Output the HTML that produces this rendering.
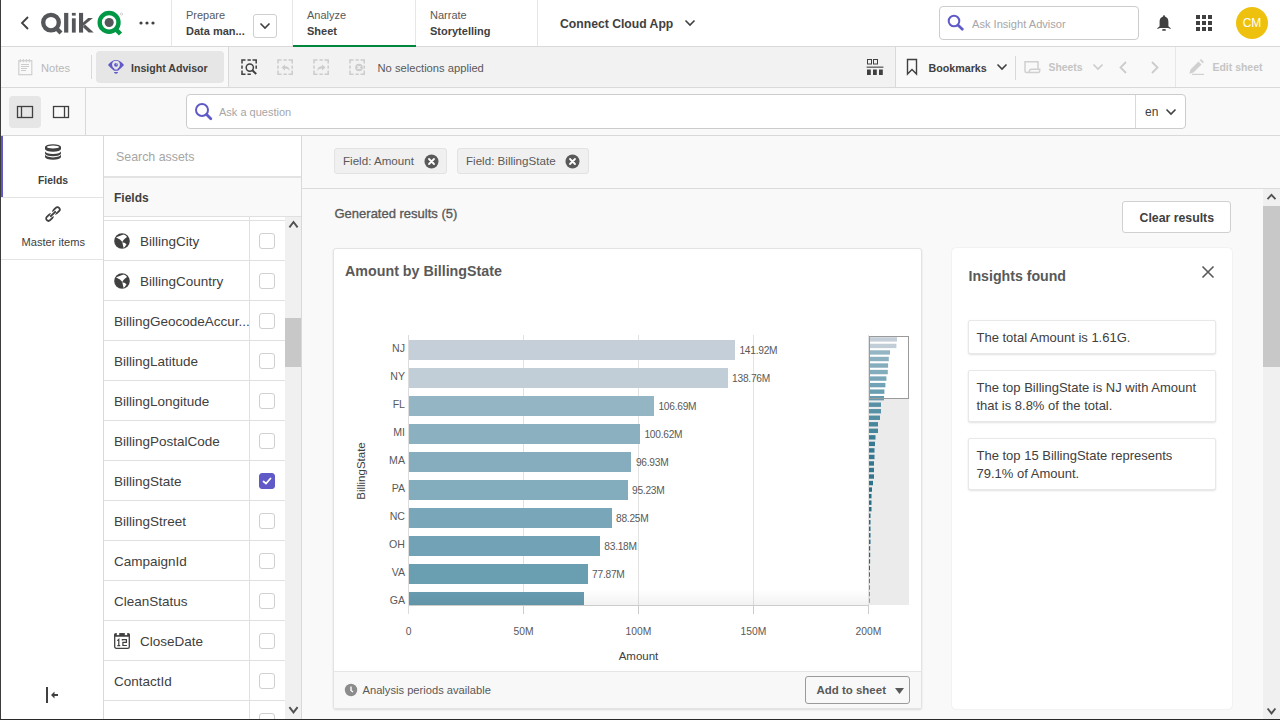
<!DOCTYPE html>
<html><head><meta charset="utf-8"><title>Qlik Sense - Insight Advisor</title>
<style>
html,body{margin:0;padding:0}
body{width:1280px;height:720px;overflow:hidden;position:relative;background:#f9f9f9;font-family:"Liberation Sans", sans-serif}
.t{position:absolute;white-space:nowrap;font-family:"Liberation Sans", sans-serif}
svg{display:block}
</style></head><body>
<div style="position:absolute;left:0px;top:0px;width:1280px;height:46px;background:#fff"></div><div style="position:absolute;left:0px;top:46px;width:1280px;height:1px;background:#d9d9d9"></div><div style="position:absolute;left:0px;top:47px;width:228px;height:40px;background:#f9f9f9"></div><div style="position:absolute;left:228px;top:47px;width:1px;height:40px;background:#d9d9d9"></div><div style="position:absolute;left:229px;top:47px;width:666px;height:40px;background:#f2f2f2"></div><div style="position:absolute;left:895px;top:47px;width:1px;height:40px;background:#d9d9d9"></div><div style="position:absolute;left:896px;top:47px;width:384px;height:40px;background:#f9f9f9"></div><div style="position:absolute;left:0px;top:87px;width:1280px;height:1px;background:#d9d9d9"></div><div style="position:absolute;left:0px;top:88px;width:1280px;height:47px;background:#f9f9f9"></div><div style="position:absolute;left:85px;top:88px;width:1px;height:47px;background:#d9d9d9"></div><div style="position:absolute;left:0px;top:135px;width:1280px;height:1px;background:#d9d9d9"></div><div style="position:absolute;left:0px;top:136px;width:103px;height:584px;background:#fff"></div><div style="position:absolute;left:103px;top:136px;width:1px;height:584px;background:#d9d9d9"></div><div style="position:absolute;left:1px;top:136px;width:2px;height:61px;background:#5f5ac8"></div><div style="position:absolute;left:0px;top:197px;width:103px;height:1px;background:#e3e3e3"></div><div style="position:absolute;left:0px;top:259px;width:103px;height:1px;background:#e3e3e3"></div><div style="position:absolute;left:104px;top:136px;width:197px;height:584px;background:#fff"></div><div style="position:absolute;left:301px;top:136px;width:1px;height:584px;background:#d9d9d9"></div><div style="position:absolute;left:104px;top:176px;width:197px;height:2px;background:#e3e3e3"></div><div style="position:absolute;left:104px;top:178px;width:197px;height:38px;background:#f9f9f9"></div><div style="position:absolute;left:104px;top:216px;width:197px;height:1px;background:#e0e0e0"></div><div style="position:absolute;left:302px;top:136px;width:978px;height:584px;background:#f9f9f9"></div><div style="position:absolute;left:302px;top:188px;width:978px;height:1px;background:#dcdcdc"></div><svg style="position:absolute;left:18px;top:14px;" width="14" height="18" viewBox="0 0 14 18"><path d="M10 3 L4 9 L10 15" fill="none" stroke="#404040" stroke-width="1.8"/></svg><svg style="position:absolute;left:36px;top:6px;" width="92" height="34" viewBox="0 0 92 34"><circle cx="15" cy="16.6" r="7.8" fill="none" stroke="#54565a" stroke-width="4.3"/><path d="M20 22 L25 27" stroke="#54565a" stroke-width="4.2"/><rect x="28.1" y="6.9" width="4.2" height="19.7" fill="#54565a"/><rect x="35.9" y="6.9" width="3.8" height="2.7" fill="#54565a"/><rect x="35.9" y="12.3" width="3.8" height="14.3" fill="#54565a"/><rect x="43" y="6.9" width="4.1" height="19.7" fill="#54565a"/><path d="M46.5 20.5 L56.9 12.1 L52.2 12.1 L46.5 17 Z" fill="#54565a"/><path d="M49 18.5 L57.7 26.6 L52.7 26.6 L46.8 21 Z" fill="#54565a"/><circle cx="73.1" cy="16.4" r="9.4" fill="none" stroke="#009845" stroke-width="4.4"/><circle cx="73.15" cy="16.5" r="4.55" fill="#54565a"/><path d="M79.5 23 L84.5 28" stroke="#009845" stroke-width="4.4"/><circle cx="85.5" cy="8" r="1.1" fill="none" stroke="#aaa" stroke-width="0.5"/></svg><svg style="position:absolute;left:139px;top:20px;" width="16" height="6" viewBox="0 0 16 6"><circle cx="2" cy="3" r="1.6" fill="#404040"/><circle cx="8" cy="3" r="1.6" fill="#404040"/><circle cx="14" cy="3" r="1.6" fill="#404040"/></svg><div style="position:absolute;left:171px;top:0px;width:1px;height:46px;background:#e6e6e6"></div><div style="position:absolute;left:292px;top:0px;width:1px;height:46px;background:#e6e6e6"></div><div style="position:absolute;left:415px;top:0px;width:1px;height:46px;background:#e6e6e6"></div><div style="position:absolute;left:537px;top:0px;width:1px;height:46px;background:#e6e6e6"></div><div class="t" style="left:186px;top:5.0px;font-size:11px;line-height:20px;color:#595959;font-weight:400;">Prepare</div><div class="t" style="left:186px;top:20.5px;font-size:11px;line-height:20px;color:#404040;font-weight:700;">Data man...</div><div style="position:absolute;left:253px;top:14px;width:24px;height:24px;box-sizing:border-box;border:1px solid #cfcfcf;border-radius:3px;background:#fff"></div><svg style="position:absolute;left:259px;top:22px;" width="12" height="8" viewBox="0 0 12 8"><path d="M1.5 1.5 L6 6 L10.5 1.5" fill="none" stroke="#404040" stroke-width="1.6"/></svg><div class="t" style="left:307px;top:5.0px;font-size:11px;line-height:20px;color:#595959;font-weight:400;">Analyze</div><div class="t" style="left:307px;top:20.5px;font-size:11px;line-height:20px;color:#404040;font-weight:700;">Sheet</div><div style="position:absolute;left:293px;top:45px;width:123px;height:2px;background:#00873d"></div><div class="t" style="left:430px;top:5.0px;font-size:11px;line-height:20px;color:#595959;font-weight:400;">Narrate</div><div class="t" style="left:430px;top:20.5px;font-size:11px;line-height:20px;color:#404040;font-weight:700;">Storytelling</div><div class="t" style="left:560px;top:13.8px;font-size:12.2px;line-height:20px;color:#404040;font-weight:700;">Connect Cloud App</div><svg style="position:absolute;left:684px;top:19px;" width="12" height="8" viewBox="0 0 12 8"><path d="M1.5 1.5 L6 6 L10.5 1.5" fill="none" stroke="#404040" stroke-width="1.6"/></svg><div style="position:absolute;left:939px;top:6px;width:200px;height:34px;box-sizing:border-box;border:1px solid #cccccc;border-radius:4px;background:#fff"></div><svg style="position:absolute;left:947px;top:14px;" width="18" height="18" viewBox="0 0 18 18"><circle cx="7" cy="7" r="5.3" fill="none" stroke="#5f5ac8" stroke-width="2"/><path d="M11.2 11.2 L15.3 15.3" stroke="#5f5ac8" stroke-width="2.7" stroke-linecap="round"/></svg><div class="t" style="left:972px;top:13.5px;font-size:11.1px;line-height:20px;color:#a6a6a6;font-weight:400;">Ask Insight Advisor</div><svg style="position:absolute;left:1156px;top:14px;" width="16" height="18" viewBox="0 0 16 18"><rect x="7.1" y="1.2" width="1.9" height="2.2" rx="0.8" fill="#404040"/><path d="M8 2.6 C5.2 2.6 3.6 5 3.6 8 V12.3 L1.3 14.3 Q1.2 15.2 2.2 14.8 Q3 14 4.2 14 H11.8 Q13 14 13.8 14.8 Q14.8 15.2 14.7 14.3 L12.4 12.3 V8 C12.4 5 10.8 2.6 8 2.6 Z" fill="#404040"/><ellipse cx="8" cy="15.9" rx="2" ry="0.95" fill="#404040"/></svg><svg style="position:absolute;left:1195px;top:14px;" width="18" height="18" viewBox="0 0 18 18"><rect x="1" y="1" width="4" height="4" fill="#404040"/><rect x="1" y="7" width="4" height="4" fill="#404040"/><rect x="1" y="13" width="4" height="4" fill="#404040"/><rect x="7" y="1" width="4" height="4" fill="#404040"/><rect x="7" y="7" width="4" height="4" fill="#404040"/><rect x="7" y="13" width="4" height="4" fill="#404040"/><rect x="13" y="1" width="4" height="4" fill="#404040"/><rect x="13" y="7" width="4" height="4" fill="#404040"/><rect x="13" y="13" width="4" height="4" fill="#404040"/></svg><div style="position:absolute;left:1236px;top:7px;width:32px;height:32px;border-radius:50%;background:#efc10f"></div><div class="t" style="left:1236px;top:13px;width:32px;text-align:center;font-size:12px;line-height:20px;color:#fff">CM</div><svg style="position:absolute;left:17px;top:58px;" width="17" height="18" viewBox="0 0 17 18"><rect x="1.8" y="2.7" width="13" height="14" fill="none" stroke="#cccccc" stroke-width="1.1"/><path d="M3.3 1 V4.3 M6.3 1 V4.3 M9.3 1 V4.3 M12.3 1 V4.3" stroke="#cccccc" stroke-width="1"/><path d="M4 6.5 H12 M4 8.5 H12 M4 10.5 H10 M4 12.5 H9" stroke="#cccccc" stroke-width="1"/></svg><div class="t" style="left:41px;top:57.5px;font-size:11.1px;line-height:20px;color:#b8b8b8;font-weight:400;">Notes</div><div style="position:absolute;left:91px;top:55px;width:1px;height:24px;background:#d9d9d9"></div><div style="position:absolute;left:96px;top:51px;width:128px;height:32px;background:#e6e6e6;border-radius:4px"></div><svg style="position:absolute;left:104px;top:55px;" width="24" height="24" viewBox="0 0 24 24"><path d="M4 10 Q8 5 12 5 Q16 5 20 10 Q17 13.5 14 15.7 H10 Q7 13.5 4 10 Z" fill="#5f5ac8"/><circle cx="12" cy="9.6" r="3.9" fill="#e6e6e6"/><path d="M9.1 11.6 L10.6 14.6 H13.4 L14.9 11.6 Z" fill="#e6e6e6"/><circle cx="12" cy="9.8" r="1.9" fill="#5f5ac8"/><circle cx="12.7" cy="9.1" r="0.6" fill="#e6e6e6"/><path d="M10 17 H14 Q14 18.8 12 18.8 Q10 18.8 10 17 Z" fill="#5f5ac8"/></svg><div class="t" style="left:131px;top:57.5px;font-size:10.6px;line-height:20px;color:#404040;font-weight:700;">Insight Advisor</div><svg style="position:absolute;left:240.5px;top:58.5px;" width="17" height="17" viewBox="0 0 17 17"><path d="M1 4.5 V1 H4.5 M11.5 1 H15.2 V4.5 M4.5 15.2 H1 V11.5 M6.5 1 H9.8 M15.2 6.5 V9.8 M9.8 15.2 H6.5 M1 9.8 V6.5" fill="none" stroke="#404040" stroke-width="1.5"/><circle cx="8.8" cy="8.6" r="3.6" fill="none" stroke="#404040" stroke-width="1.5"/><path d="M11.4 11.2 L15.2 15" stroke="#404040" stroke-width="2"/></svg><svg style="position:absolute;left:276.5px;top:58.5px;" width="17" height="17" viewBox="0 0 17 17"><path d="M1 4.5 V1 H4.5 M11.5 1 H15.2 V4.5 M15.2 11.5 V15.2 H11.5 M4.5 15.2 H1 V11.5 M6.5 1 H9.8 M15.2 6.5 V9.8 M9.8 15.2 H6.5 M1 9.8 V6.5" fill="none" stroke="#cccccc" stroke-width="1.5"/><path d="M4.5 8.5 L8 5.5 V7.3 Q12.5 7.3 12.8 12 Q11.3 9.6 8 9.6 V11.5 Z" fill="#cccccc"/></svg><svg style="position:absolute;left:312.5px;top:58.5px;" width="17" height="17" viewBox="0 0 17 17"><path d="M1 4.5 V1 H4.5 M11.5 1 H15.2 V4.5 M15.2 11.5 V15.2 H11.5 M4.5 15.2 H1 V11.5 M6.5 1 H9.8 M15.2 6.5 V9.8 M9.8 15.2 H6.5 M1 9.8 V6.5" fill="none" stroke="#cccccc" stroke-width="1.5"/><path d="M12.5 8.5 L9 5.5 V7.3 Q4.5 7.3 4.2 12 Q5.7 9.6 9 9.6 V11.5 Z" fill="#cccccc"/></svg><svg style="position:absolute;left:348.5px;top:58.5px;" width="17" height="17" viewBox="0 0 17 17"><path d="M1 4.5 V1 H4.5 M11.5 1 H15.2 V4.5 M15.2 11.5 V15.2 H11.5 M4.5 15.2 H1 V11.5 M6.5 1 H9.8 M15.2 6.5 V9.8 M9.8 15.2 H6.5 M1 9.8 V6.5" fill="none" stroke="#cccccc" stroke-width="1.5"/><circle cx="10" cy="8.5" r="3.8" fill="#cccccc"/><path d="M8.5 7 L11.5 10 M11.5 7 L8.5 10" stroke="#f2f2f2" stroke-width="1.1"/></svg><div class="t" style="left:377.5px;top:57.5px;font-size:11.2px;line-height:20px;color:#595959;font-weight:400;">No selections applied</div><svg style="position:absolute;left:866px;top:59px;" width="18" height="17" viewBox="0 0 18 17"><rect x="1.5" y="0.5" width="4" height="4.5" fill="none" stroke="#404040" stroke-width="1"/><rect x="7.5" y="0.5" width="4" height="4.5" fill="none" stroke="#404040" stroke-width="1"/><rect x="0.6" y="7.6" width="16.8" height="1.1" fill="#404040"/><rect x="1" y="10.5" width="3.8" height="5.5" fill="#404040"/><rect x="7" y="10.5" width="3.8" height="5.5" fill="#404040"/><rect x="13" y="10.5" width="3.8" height="5.5" fill="#404040"/></svg><svg style="position:absolute;left:905px;top:58px;" width="14" height="18" viewBox="0 0 14 18"><path d="M2.5 1.5 H11.5 V16 L7 11.5 L2.5 16 Z" fill="none" stroke="#404040" stroke-width="1.4"/></svg><div class="t" style="left:928.5px;top:57.5px;font-size:10.7px;line-height:20px;color:#404040;font-weight:700;">Bookmarks</div><svg style="position:absolute;left:996px;top:63px;" width="12" height="8" viewBox="0 0 12 8"><path d="M1.5 1.5 L6 6 L10.5 1.5" fill="none" stroke="#404040" stroke-width="1.6"/></svg><div style="position:absolute;left:1015px;top:56px;width:1px;height:24px;background:#d9d9d9"></div><svg style="position:absolute;left:1023px;top:59px;" width="18" height="16" viewBox="0 0 18 16"><path d="M2 12 V2.8 H15 V10.2" fill="none" stroke="#d0d0d0" stroke-width="1.5"/><path d="M6 13.5 Q6.3 10.2 8.3 10.2 H16.7 V12 Q16.7 13.5 15.2 13.5 H3.5 Q2 13.5 2 12" fill="none" stroke="#d0d0d0" stroke-width="1.5"/></svg><div class="t" style="left:1048.5px;top:58.0px;font-size:10.4px;line-height:20px;color:#c4c4c4;font-weight:700;">Sheets</div><svg style="position:absolute;left:1092px;top:63px;" width="12" height="8" viewBox="0 0 12 8"><path d="M1.5 1.5 L6 6 L10.5 1.5" fill="none" stroke="#cccccc" stroke-width="1.6"/></svg><svg style="position:absolute;left:1117px;top:60px;" width="12" height="15" viewBox="0 0 12 15"><path d="M9 2 L3.5 7.5 L9 13" fill="none" stroke="#cccccc" stroke-width="1.8"/></svg><svg style="position:absolute;left:1149px;top:60px;" width="12" height="15" viewBox="0 0 12 15"><path d="M3 2 L8.5 7.5 L3 13" fill="none" stroke="#cccccc" stroke-width="1.8"/></svg><div style="position:absolute;left:1175px;top:47px;width:1px;height:40px;background:#e6e6e6"></div><svg style="position:absolute;left:1184px;top:55px;" width="24" height="24" viewBox="0 0 24 24"><path d="M6.5 14.5 L14.5 6.5 L17.5 9.5 L9.5 17.5 Z M6.5 14.5 L9.5 17.5 L5.3 18.7 Z M15.7 5.3 L17 4 L20 7 L18.7 8.3 Z" fill="#d0d0d0"/><rect x="8" y="18.8" width="12" height="1.2" fill="#d0d0d0"/></svg><div class="t" style="left:1212.5px;top:58.0px;font-size:10.46px;line-height:20px;color:#c4c4c4;font-weight:700;">Edit sheet</div><div style="position:absolute;left:9px;top:96px;width:32px;height:32px;background:#e6e6e6;border-radius:4px"></div><svg style="position:absolute;left:16px;top:105px;" width="18" height="14" viewBox="0 0 18 14"><rect x="1.5" y="1.5" width="15" height="11" fill="none" stroke="#404040" stroke-width="1.3"/><path d="M5.5 1.5 V12.5" stroke="#404040" stroke-width="1.3"/></svg><svg style="position:absolute;left:52px;top:105px;" width="18" height="14" viewBox="0 0 18 14"><rect x="1.5" y="1.5" width="15" height="11" fill="none" stroke="#404040" stroke-width="1.3"/><path d="M12.5 1.5 V12.5" stroke="#404040" stroke-width="1.3"/></svg><div style="position:absolute;left:186px;top:94px;width:1000px;height:35px;box-sizing:border-box;border:1px solid #cccccc;border-radius:4px;background:#fff"></div><div style="position:absolute;left:1135px;top:95px;width:1px;height:33px;background:#d9d9d9"></div><svg style="position:absolute;left:194px;top:102px;" width="20" height="20" viewBox="0 0 20 20"><circle cx="8" cy="8" r="6" fill="none" stroke="#5f5ac8" stroke-width="2"/><path d="M12.6 12.6 L16.8 16.8" stroke="#5f5ac8" stroke-width="2.8" stroke-linecap="round"/></svg><div class="t" style="left:219px;top:101.5px;font-size:11px;line-height:20px;color:#a6a6a6;font-weight:400;">Ask a question</div><div class="t" style="left:1145px;top:102.0px;font-size:12px;line-height:20px;color:#404040;font-weight:400;">en</div><svg style="position:absolute;left:1165px;top:108px;" width="12" height="8" viewBox="0 0 12 8"><path d="M1.5 1.5 L6 6 L10.5 1.5" fill="none" stroke="#404040" stroke-width="1.6"/></svg><svg style="position:absolute;left:45px;top:144px;" width="16" height="16" viewBox="0 0 16 16"><path d="M0 3 A8 2.8 0 0 1 16 3 V5 A8 2.8 0 0 1 0 5 Z" fill="#404040"/><ellipse cx="8" cy="3" rx="6.2" ry="1.5" fill="#fff"/><path d="M0 7.2 A8 2.8 0 0 0 16 7.2 V9.4 A8 2.8 0 0 1 0 9.4 Z" fill="#404040"/><path d="M0 10.6 A8 2.8 0 0 0 16 10.6 V13 A8 2.8 0 0 1 0 13 Z" fill="#404040"/></svg><div class="t" style="left:38px;top:170.5px;font-size:10.4px;line-height:20px;color:#404040;font-weight:700;">Fields</div><svg style="position:absolute;left:45px;top:206px;" width="16" height="16" viewBox="0 0 16 16"><rect x="9.2" y="0.8" width="4.6" height="7.2" rx="2.3" transform="rotate(45 11.5 4.4)" fill="none" stroke="#404040" stroke-width="1.8"/><rect x="2.1" y="8" width="4.6" height="7.2" rx="2.3" transform="rotate(45 4.4 11.6)" fill="none" stroke="#404040" stroke-width="1.8"/><path d="M6.2 9.8 L9.8 6.2" stroke="#fff" stroke-width="3.4"/><path d="M5.8 10.2 L10.2 5.8" stroke="#404040" stroke-width="1.8" stroke-linecap="round"/></svg><div class="t" style="left:21.5px;top:232.0px;font-size:11.1px;line-height:20px;color:#404040;font-weight:400;">Master items</div><svg style="position:absolute;left:44px;top:686px;" width="16" height="18" viewBox="0 0 16 18"><rect x="2" y="1" width="2" height="16" fill="#404040"/><path d="M7 9 L10.5 5.5 V8 H14 V10 H10.5 V12.5 Z" fill="#404040"/></svg><div class="t" style="left:116px;top:146.5px;font-size:12.4px;line-height:20px;color:#a6a6a6;font-weight:400;">Search assets</div><div class="t" style="left:114px;top:187.5px;font-size:12px;line-height:20px;color:#404040;font-weight:700;">Fields</div><div style="position:absolute;left:104px;top:217px;width:181px;height:502px;overflow:hidden"><div style="position:absolute;left:145px;top:0;width:1px;height:502px;background:#e0e0e0"></div><div style="position:absolute;left:0;top:3px;width:181px;height:1px;background:#e0e0e0"></div><div class="t" style="left:36px;top:15px;font-size:13.5px;line-height:20px;color:#404040">BillingCity</div><svg style="position:absolute;left:10px;top:16px" width="16" height="16" viewBox="0 0 16 16"><circle cx="8" cy="8" r="7.8" fill="#404040"/><path d="M2 4.3 L5 3.3 L8 2 L10 1.5 L12.7 3.2 L12.5 4.5 L11 5.5 L9.5 7 L8.3 9 L6 6.5 L4 5.5 Z" fill="#fff"/><path d="M8.3 9.3 L11 10 L12.5 11.5 L11 13.5 L9.7 15 L9 12.5 Z" fill="#fff"/></svg><div style="position:absolute;left:155px;top:16px;width:16px;height:16px;box-sizing:border-box;border-radius:3px;background:#fff;border:1px solid #d0d0d0"></div><div style="position:absolute;left:0;top:43px;width:181px;height:1px;background:#e0e0e0"></div><div class="t" style="left:36px;top:55px;font-size:13.5px;line-height:20px;color:#404040">BillingCountry</div><svg style="position:absolute;left:10px;top:56px" width="16" height="16" viewBox="0 0 16 16"><circle cx="8" cy="8" r="7.8" fill="#404040"/><path d="M2 4.3 L5 3.3 L8 2 L10 1.5 L12.7 3.2 L12.5 4.5 L11 5.5 L9.5 7 L8.3 9 L6 6.5 L4 5.5 Z" fill="#fff"/><path d="M8.3 9.3 L11 10 L12.5 11.5 L11 13.5 L9.7 15 L9 12.5 Z" fill="#fff"/></svg><div style="position:absolute;left:155px;top:56px;width:16px;height:16px;box-sizing:border-box;border-radius:3px;background:#fff;border:1px solid #d0d0d0"></div><div style="position:absolute;left:0;top:83px;width:181px;height:1px;background:#e0e0e0"></div><div class="t" style="left:10px;top:95px;font-size:13.5px;line-height:20px;color:#404040">BillingGeocodeAccur...</div><div style="position:absolute;left:155px;top:96px;width:16px;height:16px;box-sizing:border-box;border-radius:3px;background:#fff;border:1px solid #d0d0d0"></div><div style="position:absolute;left:0;top:123px;width:181px;height:1px;background:#e0e0e0"></div><div class="t" style="left:10px;top:135px;font-size:13.5px;line-height:20px;color:#404040">BillingLatitude</div><div style="position:absolute;left:155px;top:136px;width:16px;height:16px;box-sizing:border-box;border-radius:3px;background:#fff;border:1px solid #d0d0d0"></div><div style="position:absolute;left:0;top:163px;width:181px;height:1px;background:#e0e0e0"></div><div class="t" style="left:10px;top:175px;font-size:13.5px;line-height:20px;color:#404040">BillingLongitude</div><div style="position:absolute;left:155px;top:176px;width:16px;height:16px;box-sizing:border-box;border-radius:3px;background:#fff;border:1px solid #d0d0d0"></div><div style="position:absolute;left:0;top:203px;width:181px;height:1px;background:#e0e0e0"></div><div class="t" style="left:10px;top:215px;font-size:13.5px;line-height:20px;color:#404040">BillingPostalCode</div><div style="position:absolute;left:155px;top:216px;width:16px;height:16px;box-sizing:border-box;border-radius:3px;background:#fff;border:1px solid #d0d0d0"></div><div style="position:absolute;left:0;top:243px;width:181px;height:1px;background:#e0e0e0"></div><div class="t" style="left:10px;top:255px;font-size:13.5px;line-height:20px;color:#404040">BillingState</div><div style="position:absolute;left:155px;top:256px;width:16px;height:16px;box-sizing:border-box;border-radius:3px;background:#5f5ac8;border:1px solid #5f5ac8"></div><svg style="position:absolute;left:155px;top:256px" width="16" height="16" viewBox="0 0 16 16"><path d="M4.5 8.5 L7 10.5 L11.5 5.5" fill="none" stroke="#fff" stroke-width="1.8" stroke-linecap="round"/></svg><div style="position:absolute;left:0;top:283px;width:181px;height:1px;background:#e0e0e0"></div><div class="t" style="left:10px;top:295px;font-size:13.5px;line-height:20px;color:#404040">BillingStreet</div><div style="position:absolute;left:155px;top:296px;width:16px;height:16px;box-sizing:border-box;border-radius:3px;background:#fff;border:1px solid #d0d0d0"></div><div style="position:absolute;left:0;top:323px;width:181px;height:1px;background:#e0e0e0"></div><div class="t" style="left:10px;top:335px;font-size:13.5px;line-height:20px;color:#404040">CampaignId</div><div style="position:absolute;left:155px;top:336px;width:16px;height:16px;box-sizing:border-box;border-radius:3px;background:#fff;border:1px solid #d0d0d0"></div><div style="position:absolute;left:0;top:363px;width:181px;height:1px;background:#e0e0e0"></div><div class="t" style="left:10px;top:375px;font-size:13.5px;line-height:20px;color:#404040">CleanStatus</div><div style="position:absolute;left:155px;top:376px;width:16px;height:16px;box-sizing:border-box;border-radius:3px;background:#fff;border:1px solid #d0d0d0"></div><div style="position:absolute;left:0;top:403px;width:181px;height:1px;background:#e0e0e0"></div><div class="t" style="left:36px;top:415px;font-size:13.5px;line-height:20px;color:#404040">CloseDate</div><svg style="position:absolute;left:10px;top:416px" width="16" height="16" viewBox="0 0 16 16"><rect x="0.7" y="0.9" width="14.6" height="14.4" rx="1.6" fill="none" stroke="#404040" stroke-width="1.3"/><rect x="0.2" y="0.3" width="15.6" height="3.5" rx="1.2" fill="#404040"/><rect x="2.8" y="0" width="2.4" height="2.1" fill="#fff"/><rect x="10.8" y="0" width="2.4" height="2.1" fill="#fff"/><path d="M3.3 7.6 L4.8 6.3 V12.6 M3.3 12.6 H6.2 M8.3 7.6 V6.6 H12.4 V9.4 H8.9 V12.5 H12.9" fill="none" stroke="#404040" stroke-width="1.2"/></svg><div style="position:absolute;left:155px;top:416px;width:16px;height:16px;box-sizing:border-box;border-radius:3px;background:#fff;border:1px solid #d0d0d0"></div><div style="position:absolute;left:0;top:443px;width:181px;height:1px;background:#e0e0e0"></div><div class="t" style="left:10px;top:455px;font-size:13.5px;line-height:20px;color:#404040">ContactId</div><div style="position:absolute;left:155px;top:456px;width:16px;height:16px;box-sizing:border-box;border-radius:3px;background:#fff;border:1px solid #d0d0d0"></div><div style="position:absolute;left:0;top:483px;width:181px;height:1px;background:#e0e0e0"></div><div class="t" style="left:10px;top:496.5px;font-size:13.5px;line-height:20px;color:#404040">CreatedDateTime</div><div style="position:absolute;left:155px;top:496px;width:16px;height:16px;box-sizing:border-box;border-radius:3px;background:#fff;border:1px solid #d0d0d0"></div></div><div style="position:absolute;left:285px;top:217px;width:16px;height:503px;background:#f0f0f0"></div><div style="position:absolute;left:285px;top:318px;width:16px;height:49px;background:#c8c8c8"></div><svg style="position:absolute;left:288px;top:219px;" width="11" height="10" viewBox="0 0 11 10"><path d="M1.4 8.4 L5.5 3 L9.6 8.4" fill="none" stroke="#505050" stroke-width="1.9"/></svg><svg style="position:absolute;left:288px;top:704px;" width="11" height="10" viewBox="0 0 11 10"><path d="M1.4 3.2 L5.5 8.4 L9.6 3.2" fill="none" stroke="#505050" stroke-width="1.9"/></svg><div style="position:absolute;left:334px;top:148px;width:113px;height:26px;box-sizing:border-box;border:1px solid #e3e3e3;border-radius:3px;background:#f0f0f0"></div><div class="t" style="left:343px;top:151.0px;font-size:11.6px;line-height:20px;color:#595959;font-weight:400;">Field: Amount</div><svg style="position:absolute;left:423.5px;top:153.5px;" width="15" height="15" viewBox="0 0 15 15"><circle cx="7.5" cy="7.5" r="7" fill="#595959"/><path d="M5 5 L10 10 M10 5 L5 10" stroke="#fff" stroke-width="1.8" stroke-linecap="round"/></svg><div style="position:absolute;left:457px;top:148px;width:132px;height:26px;box-sizing:border-box;border:1px solid #e3e3e3;border-radius:3px;background:#f0f0f0"></div><div class="t" style="left:466px;top:151.0px;font-size:11.6px;line-height:20px;color:#595959;font-weight:400;">Field: BillingState</div><svg style="position:absolute;left:564.5px;top:153.5px;" width="15" height="15" viewBox="0 0 15 15"><circle cx="7.5" cy="7.5" r="7" fill="#595959"/><path d="M5 5 L10 10 M10 5 L5 10" stroke="#fff" stroke-width="1.8" stroke-linecap="round"/></svg><div class="t" style="left:334.5px;top:204.0px;font-size:13.0px;line-height:20px;color:#595959;font-weight:400;-webkit-text-stroke:0.35px #595959">Generated results (5)</div><div style="position:absolute;left:1122px;top:201px;width:109px;height:32px;box-sizing:border-box;border:1px solid #d0d0d0;border-radius:3px;background:#fff"></div><div class="t" style="left:1139.5px;top:207.5px;font-size:12.3px;line-height:20px;color:#404040;font-weight:700;">Clear results</div><div style="position:absolute;left:333px;top:248px;width:589px;height:461px;box-sizing:border-box;border:1px solid #e3e3e3;border-radius:3px;background:#fff;box-shadow:0 1px 2px rgba(0,0,0,0.12)"></div><div style="position:absolute;left:334px;top:671px;width:587px;height:1px;background:#e6e6e6"></div><div style="position:absolute;left:334px;top:672px;width:587px;height:36px;background:#f8f8f8"></div><div class="t" style="left:345px;top:260.5px;font-size:14.27px;line-height:20px;color:#595959;font-weight:700;">Amount by BillingState</div><svg style="position:absolute;left:344px;top:683px;" width="14" height="14" viewBox="0 0 14 14"><circle cx="7" cy="7" r="6.2" fill="#8c8c8c"/><path d="M7 3.5 V7.5 L9 9" fill="none" stroke="#fff" stroke-width="1.4"/></svg><div class="t" style="left:362.5px;top:680.0px;font-size:11.17px;line-height:20px;color:#595959;font-weight:400;">Analysis periods available</div><div style="position:absolute;left:805px;top:676px;width:105px;height:28px;box-sizing:border-box;border:1px solid #9a9a9a;border-radius:3px;background:#f8f8f8"></div><div class="t" style="left:816.5px;top:680.0px;font-size:11.48px;line-height:20px;color:#595959;font-weight:700;">Add to sheet</div><svg style="position:absolute;left:894px;top:687px;" width="11" height="8" viewBox="0 0 11 8"><path d="M1 1 H10 L5.5 7 Z" fill="#595959"/></svg><div style="position:absolute;left:523px;top:335px;width:1px;height:270px;background:#e3e3e3"></div><div style="position:absolute;left:523px;top:605px;width:1px;height:9px;background:#cccccc"></div><div style="position:absolute;left:638px;top:335px;width:1px;height:270px;background:#e3e3e3"></div><div style="position:absolute;left:638px;top:605px;width:1px;height:9px;background:#cccccc"></div><div style="position:absolute;left:753px;top:335px;width:1px;height:270px;background:#e3e3e3"></div><div style="position:absolute;left:753px;top:605px;width:1px;height:9px;background:#cccccc"></div><div style="position:absolute;left:868px;top:335px;width:1px;height:270px;background:#e3e3e3"></div><div style="position:absolute;left:868px;top:605px;width:1px;height:9px;background:#cccccc"></div><div style="position:absolute;left:408px;top:335px;width:1px;height:279px;background:#dcdcdc"></div><div style="position:absolute;left:409px;top:605px;width:460px;height:1px;background:#cccccc"></div><div style="position:absolute;left:409px;top:335px;width:460px;height:270px;overflow:hidden"><div style="position:absolute;left:0;top:5px;width:325.9px;height:20px;background:rgb(197, 207, 217)"></div><div class="t" style="left:330.4px;top:5.5px;font-size:10.2px;letter-spacing:-0.25px;line-height:20px;color:#595959">141.92M</div><div style="position:absolute;left:0;top:33px;width:318.6px;height:20px;background:rgb(193, 205, 215)"></div><div class="t" style="left:323.1px;top:33.5px;font-size:10.2px;letter-spacing:-0.25px;line-height:20px;color:#595959">138.76M</div><div style="position:absolute;left:0;top:61px;width:244.9px;height:20px;background:rgb(148, 181, 196)"></div><div class="t" style="left:249.4px;top:61.5px;font-size:10.2px;letter-spacing:-0.25px;line-height:20px;color:#595959">106.69M</div><div style="position:absolute;left:0;top:89px;width:230.9px;height:20px;background:rgb(139, 176, 192)"></div><div class="t" style="left:235.4px;top:89.5px;font-size:10.2px;letter-spacing:-0.25px;line-height:20px;color:#595959">100.62M</div><div style="position:absolute;left:0;top:117px;width:222.4px;height:20px;background:rgb(134, 173, 190)"></div><div class="t" style="left:226.9px;top:117.5px;font-size:10.2px;letter-spacing:-0.25px;line-height:20px;color:#595959">96.93M</div><div style="position:absolute;left:0;top:145px;width:218.5px;height:20px;background:rgb(131, 172, 189)"></div><div class="t" style="left:223.0px;top:145.5px;font-size:10.2px;letter-spacing:-0.25px;line-height:20px;color:#595959">95.23M</div><div style="position:absolute;left:0;top:173px;width:202.5px;height:20px;background:rgb(121, 166, 184)"></div><div class="t" style="left:207.0px;top:173.5px;font-size:10.2px;letter-spacing:-0.25px;line-height:20px;color:#595959">88.25M</div><div style="position:absolute;left:0;top:201px;width:190.8px;height:20px;background:rgb(114, 162, 181)"></div><div class="t" style="left:195.3px;top:201.5px;font-size:10.2px;letter-spacing:-0.25px;line-height:20px;color:#595959">83.18M</div><div style="position:absolute;left:0;top:229px;width:178.6px;height:20px;background:rgb(106, 158, 177)"></div><div class="t" style="left:183.1px;top:229.5px;font-size:10.2px;letter-spacing:-0.25px;line-height:20px;color:#595959">77.87M</div><div style="position:absolute;left:0;top:257px;width:174.5px;height:20px;background:rgb(103, 156, 176)"></div></div><div style="position:absolute;left:409px;top:589px;width:459px;height:16px;background:linear-gradient(rgba(0,0,0,0),rgba(0,0,0,0.05))"></div><div class="t" style="left:360px;width:45px;text-align:right;top:338px;font-size:10.6px;line-height:20px;color:#595959">NJ</div><div class="t" style="left:360px;width:45px;text-align:right;top:366px;font-size:10.6px;line-height:20px;color:#595959">NY</div><div class="t" style="left:360px;width:45px;text-align:right;top:394px;font-size:10.6px;line-height:20px;color:#595959">FL</div><div class="t" style="left:360px;width:45px;text-align:right;top:422px;font-size:10.6px;line-height:20px;color:#595959">MI</div><div class="t" style="left:360px;width:45px;text-align:right;top:450px;font-size:10.6px;line-height:20px;color:#595959">MA</div><div class="t" style="left:360px;width:45px;text-align:right;top:478px;font-size:10.6px;line-height:20px;color:#595959">PA</div><div class="t" style="left:360px;width:45px;text-align:right;top:506px;font-size:10.6px;line-height:20px;color:#595959">NC</div><div class="t" style="left:360px;width:45px;text-align:right;top:534px;font-size:10.6px;line-height:20px;color:#595959">OH</div><div class="t" style="left:360px;width:45px;text-align:right;top:562px;font-size:10.6px;line-height:20px;color:#595959">VA</div><div class="t" style="left:360px;width:45px;text-align:right;top:590px;font-size:10.6px;line-height:20px;color:#595959">GA</div><div class="t" style="left:378.5px;width:60px;text-align:center;top:622px;font-size:10.3px;line-height:20px;color:#595959">0</div><div class="t" style="left:493.5px;width:60px;text-align:center;top:622px;font-size:10.3px;line-height:20px;color:#595959">50M</div><div class="t" style="left:608.5px;width:60px;text-align:center;top:622px;font-size:10.3px;line-height:20px;color:#595959">100M</div><div class="t" style="left:723.5px;width:60px;text-align:center;top:622px;font-size:10.3px;line-height:20px;color:#595959">150M</div><div class="t" style="left:838.5px;width:60px;text-align:center;top:622px;font-size:10.3px;line-height:20px;color:#595959">200M</div><div class="t" style="left:608.5px;width:60px;text-align:center;top:645.5px;font-size:11.5px;line-height:20px;color:#404040">Amount</div><div class="t" style="left:361px;top:471px;font-size:11.5px;line-height:20px;color:#404040;transform:translate(-50%,-50%) rotate(-90deg)">BillingState</div><div style="position:absolute;left:869px;top:336px;width:40px;height:269px;background:#ebebeb"></div><div style="position:absolute;left:869px;top:336px;width:40px;height:63px;box-sizing:border-box;background:#fff;border:1px solid #9a9a9a"></div><svg style="position:absolute;left:869px;top:336px;" width="40" height="269" viewBox="0 0 40 269"><rect x="0" y="1.20" width="28" height="4.4" fill="rgb(197, 207, 217)"/><rect x="0" y="7.73" width="27.4" height="4.4" fill="rgb(193, 205, 215)"/><rect x="0" y="14.26" width="21" height="4.4" fill="rgb(148, 181, 196)"/><rect x="0" y="20.79" width="19.8" height="4.4" fill="rgb(139, 176, 192)"/><rect x="0" y="27.32" width="19.1" height="4.4" fill="rgb(134, 173, 190)"/><rect x="0" y="33.85" width="18.8" height="4.4" fill="rgb(131, 172, 189)"/><rect x="0" y="40.38" width="17.4" height="4.4" fill="rgb(121, 166, 184)"/><rect x="0" y="46.91" width="16.4" height="4.4" fill="rgb(114, 162, 181)"/><rect x="0" y="53.44" width="15.4" height="4.4" fill="rgb(106, 158, 177)"/><rect x="0" y="59.97" width="15" height="4.4" fill="rgb(103, 156, 176)"/><rect x="0" y="66.50" width="12" height="4.4" fill="rgb(88, 145, 166)"/><rect x="0" y="73.03" width="12" height="4.4" fill="rgb(88, 145, 166)"/><rect x="0" y="79.56" width="11" height="4.4" fill="rgb(82, 141, 162)"/><rect x="0" y="86.09" width="9" height="4.4" fill="rgb(72, 134, 156)"/><rect x="0" y="92.62" width="9" height="4.4" fill="rgb(72, 134, 156)"/><rect x="0" y="99.15" width="6.5" height="4.4" fill="rgb(59, 124, 147)"/><rect x="0" y="105.68" width="6" height="4.4" fill="rgb(56, 122, 145)"/><rect x="0" y="112.21" width="5.5" height="4.4" fill="rgb(54, 121, 144)"/><rect x="0" y="118.74" width="5.5" height="4.4" fill="rgb(54, 121, 144)"/><rect x="0" y="125.27" width="5" height="4.4" fill="rgb(51, 119, 142)"/><rect x="0" y="131.80" width="5" height="4.4" fill="rgb(51, 119, 142)"/><rect x="0" y="138.33" width="5" height="4.4" fill="rgb(51, 119, 142)"/><rect x="0" y="144.86" width="4" height="4.4" fill="rgb(46, 115, 139)"/><rect x="0" y="151.39" width="3" height="4.4" fill="rgb(41, 111, 135)"/><rect x="0" y="157.92" width="2.5" height="4.4" fill="rgb(38, 109, 134)"/><rect x="0" y="164.45" width="2.5" height="4.4" fill="rgb(38, 109, 134)"/><rect x="0" y="170.98" width="2.5" height="4.4" fill="rgb(38, 109, 134)"/><rect x="0" y="177.51" width="1.5" height="4.4" fill="rgb(33, 106, 130)"/><rect x="0" y="184.04" width="1.5" height="4.4" fill="rgb(33, 106, 130)"/><rect x="0" y="190.57" width="1.5" height="4.4" fill="rgb(33, 106, 130)"/><rect x="0" y="197.10" width="1.5" height="4.4" fill="rgb(33, 106, 130)"/><rect x="0" y="203.63" width="1.5" height="4.4" fill="rgb(33, 106, 130)"/><rect x="0" y="210.16" width="1.2" height="4.4" fill="rgb(31, 104, 129)"/><rect x="0" y="216.69" width="1.2" height="4.4" fill="rgb(31, 104, 129)"/><rect x="0" y="223.22" width="1.1" height="4.4" fill="rgb(31, 104, 129)"/><rect x="0" y="229.75" width="1" height="4.4" fill="rgb(30, 104, 128)"/><rect x="0" y="236.28" width="0.9" height="4.4" fill="rgb(30, 103, 128)"/><rect x="0" y="242.81" width="0.8" height="4.4" fill="rgb(29, 103, 128)"/><rect x="0" y="249.34" width="0.7" height="4.4" fill="rgb(29, 103, 127)"/><rect x="0" y="255.87" width="0.6" height="4.4" fill="rgb(28, 102, 127)"/><rect x="0" y="262.40" width="0.5" height="4.4" fill="rgb(28, 102, 127)"/></svg><div style="position:absolute;left:869px;top:336px;width:40px;height:63px;box-sizing:border-box;border:1px solid #9a9a9a"></div><div style="position:absolute;left:952px;top:248px;width:280px;height:461px;border-radius:4px;background:#fff;box-shadow:0 0 1.5px rgba(0,0,0,0.14)"></div><div class="t" style="left:968.5px;top:266.0px;font-size:14.16px;line-height:20px;color:#595959;font-weight:700;">Insights found</div><svg style="position:absolute;left:1201px;top:265px;" width="14" height="14" viewBox="0 0 14 14"><path d="M1.5 1.5 L12.5 12.5 M12.5 1.5 L1.5 12.5" stroke="#595959" stroke-width="1.6"/></svg><div style="position:absolute;left:968px;top:320px;width:248px;height:34px;box-sizing:border-box;border:1px solid #e8e8e8;border-radius:2px;background:#fff;box-shadow:0 1px 2px rgba(0,0,0,0.12)"></div><div class="t" style="left:976.5px;top:327.5px;font-size:13.0px;line-height:20px;color:#404040;font-weight:400;">The total Amount is 1.61G.</div><div style="position:absolute;left:968px;top:370px;width:248px;height:52px;box-sizing:border-box;border:1px solid #e8e8e8;border-radius:2px;background:#fff;box-shadow:0 1px 2px rgba(0,0,0,0.12)"></div><div class="t" style="left:976.5px;top:377.5px;font-size:13.0px;line-height:20px;color:#404040;font-weight:400;">The top BillingState is NJ with Amount</div><div class="t" style="left:976.5px;top:395.5px;font-size:13.0px;line-height:20px;color:#404040;font-weight:400;">that is 8.8% of the total.</div><div style="position:absolute;left:968px;top:438px;width:248px;height:52px;box-sizing:border-box;border:1px solid #e8e8e8;border-radius:2px;background:#fff;box-shadow:0 1px 2px rgba(0,0,0,0.12)"></div><div class="t" style="left:976.5px;top:445.5px;font-size:13.0px;line-height:20px;color:#404040;font-weight:400;">The top 15 BillingState represents</div><div class="t" style="left:976.5px;top:463.5px;font-size:13.0px;line-height:20px;color:#404040;font-weight:400;">79.1% of Amount.</div><div style="position:absolute;left:1263px;top:189px;width:17px;height:531px;background:#f0f0f0"></div><div style="position:absolute;left:1263px;top:206px;width:17px;height:161px;background:#c8c8c8"></div><svg style="position:absolute;left:1266px;top:192px;" width="11" height="10" viewBox="0 0 11 10"><path d="M1.5 7.2 L5.5 2.8 L9.5 7.2" fill="none" stroke="#505050" stroke-width="1.8"/></svg><svg style="position:absolute;left:1266px;top:707px;" width="11" height="9" viewBox="0 0 11 9"><path d="M1.6 1.5 L5.5 6.4 L9.4 1.5" fill="none" stroke="#505050" stroke-width="1.9"/></svg><div style="position:absolute;left:0px;top:0px;width:1px;height:720px;background:#3c3c3c"></div><div style="position:absolute;left:0px;top:719px;width:1280px;height:1px;background:#2a2a2a"></div>
</body></html>
